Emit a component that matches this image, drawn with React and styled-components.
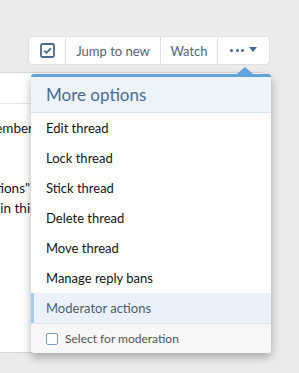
import styled, { createGlobalStyle } from "styled-components";

const GlobalStyle = createGlobalStyle`
  html, body {
    margin: 0;
    background: #ebebeb;
    font-family: Lato, "Liberation Sans", sans-serif;
    color: #141414;
  }
`;

const menuItems = [
  "Edit thread",
  "Lock thread",
  "Stick thread",
  "Delete thread",
  "Move thread",
  "Manage reply bans",
  "Moderator actions",
];

const postLines = [
  { text: "Welcome! Please register to become a member", end: 33 },
  { text: "", end: 33 },
  { text: "", end: 33 },
  { text: 'then click "More options"', end: 30 },
  { text: "to moderate the posts in this", end: 36 },
];

/* ----------------------- layout ----------------------- */
const Page = styled.div`
  padding-top: 36px;
  min-height: 337px;
`;

const Toolbar = styled.div`
  position: relative;
  display: flex;
  justify-content: flex-end;
  padding-right: 29px;
`;

const ButtonGroup = styled.div`
  display: flex;
  height: 29px;
  background: #fff;
  border: 1px solid #e0e0e0;
  border-radius: 4px;
  box-sizing: border-box;
`;

const Button = styled.div`
  display: flex;
  align-items: center;
  justify-content: center;
  gap: 5px;
  width: ${(p) => p.$w}px;
  box-sizing: border-box;
  font-size: 13px;
  color: #56657a;
  & + & {
    border-left: 1px solid #dcdcdc;
  }
`;

const Post = styled.div`
  width: 262px;
  margin-top: 7px;
  height: 279px;
  background: #fff;
  border-top: 1px solid #d6d6d6;
  border-bottom: 1px solid #d6d6d6;
`;

const PostHeader = styled.div`
  height: 30px;
  border-bottom: 1px solid #e6e6e6;
`;

const PostBody = styled.div`
  padding-top: 14px;
`;

const Line = styled.div`
  width: ${(p) => p.$end}px;
  height: 20px;
  line-height: 20px;
  display: flex;
  justify-content: flex-end;
  overflow: hidden;
  white-space: nowrap;
  font-size: 13.5px;
  color: #141414;
`;

/* ----------------------- menu ----------------------- */
const Menu = styled.div`
  position: absolute;
  top: 38px;
  right: 28px;
  width: 240px;
  background: #fff;
  border-top: 3px solid #63a3db;
  border-radius: 3px 3px 4px 4px;
  box-shadow: 0 4px 10px rgba(0, 0, 0, 0.3);
  z-index: 2;
`;

const Arrow = styled.span`
  position: absolute;
  top: -10px;
  right: 18px;
  width: 0;
  height: 0;
  border-left: 8px solid transparent;
  border-right: 8px solid transparent;
  border-bottom: 7px solid #63a3db;
`;

const MenuHeader = styled.div`
  height: 35px;
  display: flex;
  align-items: center;
  padding-left: 15px;
  background: #edf4fb;
  border-bottom: 1px solid #d9e5f0;
  font-size: 17px;
  color: #4a6c92;
`;

const MenuItem = styled.div`
  height: 30px;
  display: flex;
  align-items: center;
  padding-left: ${(p) => (p.$active ? 12 : 15)}px;
  font-size: 13px;
  color: ${(p) => (p.$active ? "#4d5d70" : "#141414")};
  background: ${(p) => (p.$active ? "#e9f2fb" : "transparent")};
  border-left: ${(p) => (p.$active ? "3px solid #a7cbea" : "none")};
`;

const MenuFooter = styled.div`
  height: 29px;
  display: flex;
  align-items: center;
  gap: 7px;
  padding-left: 15px;
  background: #f7f7f7;
  border-top: 1px solid #e3e3e3;
  border-radius: 0 0 4px 4px;
  font-size: 12px;
  color: #555;
`;

const Check = styled.span`
  width: 10px;
  height: 10px;
  border: 1px solid #7f9dbd;
  border-radius: 2px;
  background: #fff;
`;

const Dots = styled.span`
  display: flex;
  gap: 2.5px;
  & > i {
    width: 3px;
    height: 3px;
    border-radius: 50%;
    background: #47698f;
  }
`;

const Caret = styled.span`
  width: 0;
  height: 0;
  margin-top: -2px;
  border-left: 4px solid transparent;
  border-right: 4px solid transparent;
  border-top: 5px solid #47698f;
`;

const CheckIcon = () => (
  <svg width="15" height="15" viewBox="0 0 15 15">
    <rect x="1" y="1" width="13" height="13" rx="1.5" fill="none" stroke="#47698f" strokeWidth="1.8" />
    <path d="M4.2 7.6 L6.5 9.8 L10.9 5.3" fill="none" stroke="#47698f" strokeWidth="1.8" />
  </svg>
);

export default function App() {
  return (
    <Page>
      <GlobalStyle />
      <Toolbar>
        <ButtonGroup>
          <Button $w={36}>
            <CheckIcon />
          </Button>
          <Button $w={95}>Jump to new</Button>
          <Button $w={57}>Watch</Button>
          <Button $w={52}>
            <Dots>
              <i />
              <i />
              <i />
            </Dots>
            <Caret />
          </Button>
        </ButtonGroup>

        <Menu>
          <Arrow />
          <MenuHeader>More options</MenuHeader>
          {menuItems.map((label) => (
            <MenuItem key={label} $active={label === "Moderator actions"}>
              {label}
            </MenuItem>
          ))}
          <MenuFooter>
            <Check />
            Select for moderation
          </MenuFooter>
        </Menu>
      </Toolbar>

      <Post>
        <PostHeader />
        <PostBody>
          {postLines.map((l, i) => (
            <Line key={i} $end={l.end}>
              <span>{l.text}</span>
            </Line>
          ))}
        </PostBody>
      </Post>
    </Page>
  );
}
